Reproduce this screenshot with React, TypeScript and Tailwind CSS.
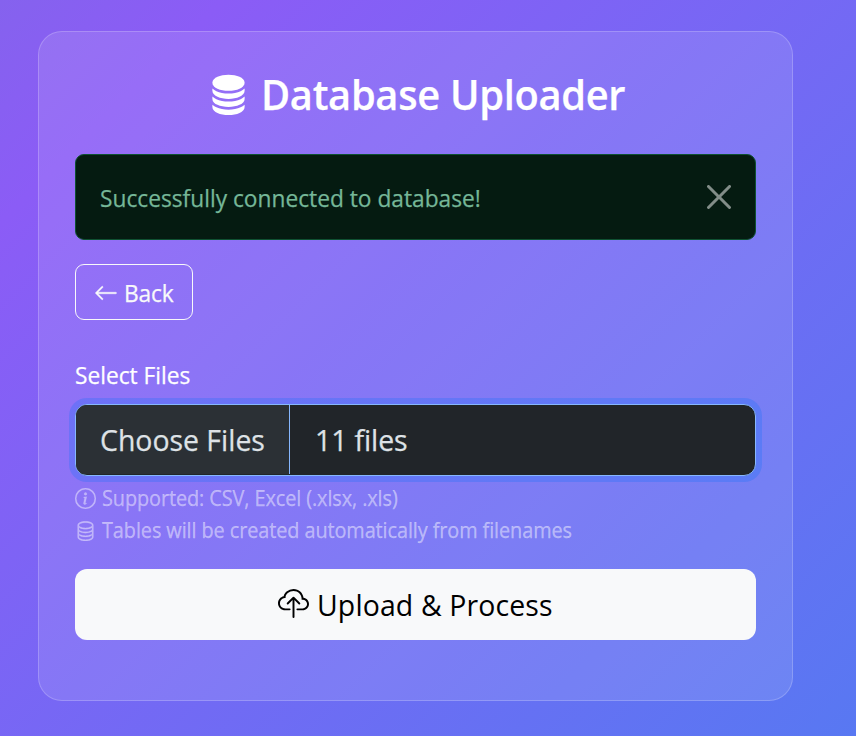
import type { ReactNode } from "react";
import { BsArrowLeft, BsCloudUpload, BsDatabase, BsDatabaseFill, BsInfoCircle } from "react-icons/bs";

// Slightly condensed single-line text.
function Text({ children, className = "" }: { children: ReactNode; className?: string }) {
  return <span className={`inline-block origin-left scale-x-[0.947] whitespace-nowrap ${className}`}>{children}</span>;
}

function Heading() {
  return (
    <h2 className="flex h-[50px] items-center gap-[11px] pl-[132px] pt-[2px] text-white">
      <BsDatabaseFill className="mb-[2px] size-[43px]" />
      <Text className="text-[42px] font-semibold leading-[50px] tracking-[-0.3px]">Database Uploader</Text>
    </h2>
  );
}

function Alert() {
  return (
    <div className="mt-9 flex h-[86px] items-center justify-between rounded-[9px] border border-[#0f5132] bg-[#051b11] pl-6 pr-[24px]">
      <Text className="pt-[2px] text-[24px] leading-9 text-[#75b798]">Successfully connected to database!</Text>
      <button aria-label="Close" className="text-white opacity-50">
        <svg className="size-6" viewBox="0 0 16 16" fill="currentColor">
          <path d="M.293.293a1 1 0 0 1 1.414 0L8 6.586 14.293.293a1 1 0 1 1 1.414 1.414L9.414 8l6.293 6.293a1 1 0 0 1-1.414 1.414L8 9.414l-6.293 6.293a1 1 0 0 1-1.414-1.414L6.586 8 .293 1.707a1 1 0 0 1 0-1.414z" />
        </svg>
      </button>
    </div>
  );
}

function FilePicker() {
  return (
    <div className="flex h-[72px] overflow-hidden rounded-xl border border-[#86b7fe] bg-[#212529] text-[30px] leading-[45px] text-[#dee2e6] shadow-[0_0_0_6px_rgba(13,110,253,0.25)]">
      <button className="mb-px flex w-[214px] items-center border-r border-[#86b7fe] bg-[#2b3035] pl-6">
        <Text>Choose Files</Text>
      </button>
      <span className="mb-px flex items-center pl-[25px]">
        <Text className="tracking-[-0.1px]">11 files</Text>
      </span>
    </div>
  );
}

export default function App() {
  return (
    <main className="h-[736px] w-[856px] bg-[linear-gradient(135deg,#8562ee_0%,#8b5cf6_14%,#5878f2_100%)] pl-[38px] pt-[31px] font-['Open_Sans','Noto_Sans',sans-serif] [-webkit-text-stroke:0.25px]">
      <section className="h-[670px] w-[755px] rounded-3xl border border-white/20 bg-white/11 p-9">
        <Heading />
        <Alert />
        <button className="mt-6 flex h-14 w-[118px] items-center gap-[6px] rounded-[9px] border border-[#f8f9fa] pl-[18px] text-[#f8f9fa]">
          <BsArrowLeft className="mt-px size-6 stroke-[0.3]" />
          <Text className="pt-[2px] text-[24px] tracking-[-0.2px]">Back</Text>
        </button>
        <label className="mb-[11px] mt-[37px] block text-[24px] leading-9 text-white">
          <Text>Select Files</Text>
        </label>
        <FilePicker />
        <div className="mt-[6px] text-[21px] leading-8 text-white/45">
          <p className="flex h-8 items-center gap-[6px]">
            <BsInfoCircle className="size-[21px] stroke-[0.2]" />
            <Text className="tracking-[-0.1px]">Supported: CSV, Excel (.xlsx, .xls)</Text>
          </p>
          <p className="flex h-8 items-center gap-[6px]">
            <BsDatabase className="size-[21px] stroke-[0.2]" />
            <Text className="tracking-[-0.1px]">Tables will be created automatically from filenames</Text>
          </p>
        </div>
        <button className="mt-[23px] flex h-[71px] w-full items-center gap-[8px] rounded-xl bg-[#f8f9fa] pl-[203px] text-[30px] text-black [-webkit-text-stroke:0px]">
          <BsCloudUpload className="size-[31px]" />
          <Text className="tracking-[0.15px]">Upload &amp; Process</Text>
        </button>
      </section>
    </main>
  );
}
